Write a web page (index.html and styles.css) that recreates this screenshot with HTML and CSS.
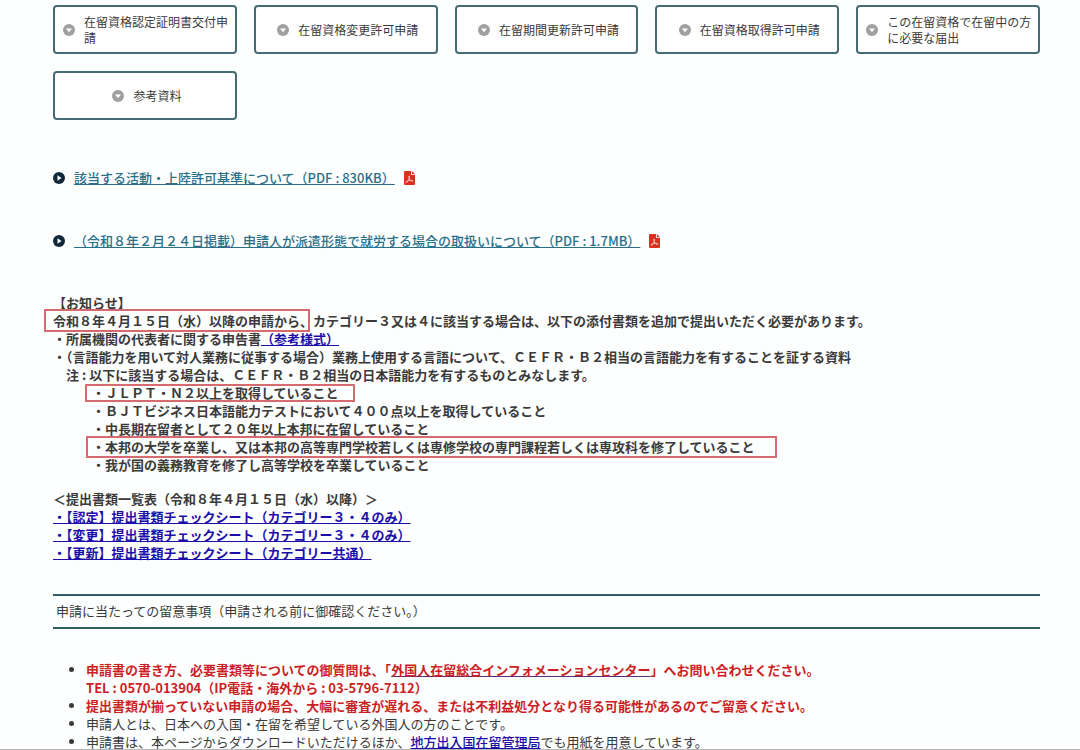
FILE: index.html
```html
<!DOCTYPE html>
<html lang="ja">
<head>
  <meta charset="UTF-8">
  <meta name="viewport" content="width=device-width, initial-scale=1.0">
  <title>在留資格</title>
  <link rel="stylesheet" href="styles.css">
</head>
<body>
  <svg class="defs" aria-hidden="true">
    <symbol id="icon-down" viewBox="0 0 12 12">
      <circle cx="6" cy="6" r="6" fill="#a0a0a0"/>
      <path d="M3 4.500h6L6 8.200z" fill="#fff"/>
    </symbol>
    <symbol id="icon-play" viewBox="0 0 12 12">
      <circle cx="6" cy="6" r="6" fill="#10293a"/>
      <path d="M4.500 3.200v5.600L8.500 6z" fill="#fff"/>
    </symbol>
    <symbol id="icon-pdf" viewBox="0 0 11 14">
      <path d="M1 0h6v4h4v9a1 1 0 0 1-1 1H1a1 1 0 0 1-1-1V1a1 1 0 0 1 1-1z" fill="#d9301f"/>
      <path d="M7.800 0L11 3.200H7.800z" fill="#d9301f"/>
      <path d="M5 5c1 0 .7 2.200-.5 4.200S2.200 12 2 11.200s2.500-1.900 4.500-2 3 1 2.200 1.200S5.600 9 5 7.300 4.600 5 5 5z" fill="none" stroke="#fff" stroke-width=".6"/>
    </symbol>
  </svg>

  <main>
    <nav class="anchor-list">
      <a href="#nintei"><svg class="icon"><use href="#icon-down"/></svg><span>在留資格認定証明書交付申請</span></a>
      <a href="#henko"><svg class="icon"><use href="#icon-down"/></svg><span>在留資格変更許可申請</span></a>
      <a href="#koshin"><svg class="icon"><use href="#icon-down"/></svg><span>在留期間更新許可申請</span></a>
      <a href="#shutoku"><svg class="icon"><use href="#icon-down"/></svg><span>在留資格取得許可申請</span></a>
      <a href="#todokede"><svg class="icon"><use href="#icon-down"/></svg><span>この在留資格で在留中の方に必要な届出</span></a>
      <a href="#sanko"><svg class="icon"><use href="#icon-down"/></svg><span>参考資料</span></a>
    </nav>

    <ul class="pdf-list">
      <li><svg class="icon"><use href="#icon-play"/></svg><a href="#">該当する活動・上陸許可基準について（PDF : 830KB）</a><svg class="icon-pdf"><use href="#icon-pdf"/></svg></li>
      <li><svg class="icon"><use href="#icon-play"/></svg><a href="#">（令和８年２月２４日掲載）申請人が派遣形態で就労する場合の取扱いについて（PDF : 1.7MB）</a><svg class="icon-pdf"><use href="#icon-pdf"/></svg></li>
    </ul>

    <section class="notice">
      <p>【お知らせ】</p>
      <p><span class="mark mark-date">令和８年４月１５日（水）以降の申請から、</span>カテゴリー３又は４に該当する場合は、以下の添付書類を追加で提出いただく必要があります。</p>
      <p>・所属機関の代表者に関する申告書<a href="#">（参考様式）</a></p>
      <p>・（言語能力を用いて対人業務に従事する場合）業務上使用する言語について、ＣＥＦＲ・Ｂ２相当の言語能力を有することを証する資料</p>
      <p class="note">注 : 以下に該当する場合は、ＣＥＦＲ・Ｂ２相当の日本語能力を有するものとみなします。</p>
      <div class="conditions">
        <p><span class="mark mark-jlpt">・ＪＬＰＴ・Ｎ２以上を取得していること</span></p>
        <p>・ＢＪＴビジネス日本語能力テストにおいて４００点以上を取得していること</p>
        <p>・中長期在留者として２０年以上本邦に在留していること</p>
        <p><span class="mark mark-school">・本邦の大学を卒業し、又は本邦の高等専門学校若しくは専修学校の専門課程若しくは専攻科を修了していること</span></p>
        <p>・我が国の義務教育を修了し高等学校を卒業していること</p>
      </div>
    </section>

    <section class="sheets">
      <p>＜提出書類一覧表（令和８年４月１５日（水）以降）＞</p>
      <p><a href="#">・【認定】提出書類チェックシート（カテゴリー３・４のみ）</a></p>
      <p><a href="#">・【変更】提出書類チェックシート（カテゴリー３・４のみ）</a></p>
      <p><a href="#">・【更新】提出書類チェックシート（カテゴリー共通）</a></p>
    </section>

    <h2>申請に当たっての留意事項（申請される前に御確認ください。）</h2>

    <ul class="caution-list">
      <li><strong>申請書の書き方、必要書類等についての御質問は、「<a href="#">外国人在留総合インフォメーションセンター</a>」へお問い合わせください。<br>TEL : 0570-013904（IP電話・海外から : 03-5796-7112）</strong></li>
      <li><strong>提出書類が揃っていない申請の場合、大幅に審査が遅れる、または不利益処分となり得る可能性があるのでご留意ください。</strong></li>
      <li>申請人とは、日本への入国・在留を希望している外国人の方のことです。</li>
      <li>申請書は、本ページからダウンロードいただけるほか、<a href="#">地方出入国在留管理局</a>でも用紙を用意しています。</li>
    </ul>
  </main>
  <div class="bottom-line"></div>
</body>
</html>
```

FILE: styles.css
```css
body {
  margin: 0;
  background-color: #fdfefe;
  color: #3a3a3a;
  font-family: "Noto Sans CJK JP", sans-serif;
  font-size: 13px;
  line-height: 18px;
}

p,
ul,
h2 {
  margin: 0;
  padding: 0;
}

a {
  color: #1a0dab;
  text-underline-offset: 1px;
  text-decoration-skip-ink: none;
}

main {
  padding: 5px 40px 0 53px;
}

.defs {
  display: none;
}

.icon {
  width: 12px;
  height: 12px;
  flex-shrink: 0;
}

/* ページ内リンク */
.anchor-list {
  display: grid;
  grid-template-columns: repeat(5, 1fr);
  gap: 17px;
}

.anchor-list a {
  display: flex;
  justify-content: center;
  align-items: center;
  gap: 9px;
  box-sizing: border-box;
  min-height: 49px;
  padding: 0 4px 0 8px;
  border: 2px solid #456b75;
  border-radius: 4px;
  background-color: #fff;
  color: #3a3a3a;
  font-size: 12px;
  line-height: 16px;
  text-decoration: none;
}

/* PDFリンク */
.pdf-list {
  display: flex;
  flex-direction: column;
  gap: 45px;
  margin-top: 49px;
  list-style: none;
}

.pdf-list li {
  display: flex;
  align-items: center;
}

.pdf-list a {
  margin: 0 9px;
  color: #28708a;
  font-weight: 500;
}

.icon-pdf {
  width: 11px;
  height: 14px;
}

/* お知らせ */
.notice,
.sheets {
  font-weight: 700;
}

.notice {
  margin-top: 44px;
}

.note {
  padding-left: 13px;
}

.conditions {
  padding-left: 39px;
}

/* 赤枠 */
.mark {
  position: relative;
}

.mark::after {
  content: "";
  position: absolute;
  border: 2px solid #d66a6e;
}

.mark-date::after {
  inset: -2px 3px -2px -9px;
}

.mark-jlpt::after {
  inset: 1px -16px 0 -7px;
}

.mark-school::after {
  inset: -1px -22px -2px -6px;
}

.sheets {
  margin-top: 16px;
}

h2 {
  margin-top: 32px;
  padding: 6px 3px 7px;
  border-top: 2px solid #315c63;
  border-bottom: 2px solid #315c63;
  font-size: 13px;
  font-weight: 400;
}

/* 留意事項 */
.caution-list {
  margin-top: 32px;
  padding-left: 33px;
}

.caution-list a {
  font-weight: 500;
}

.caution-list strong {
  color: #cc1f24;
}

.caution-list strong a {
  color: #cc1f24;
  font-weight: 700;
  text-decoration-color: #5b2a7a;
}

.bottom-line {
  position: fixed;
  right: 0;
  bottom: 0;
  left: 0;
  height: 1px;
  background-color: #b5b5b5;
}
```
